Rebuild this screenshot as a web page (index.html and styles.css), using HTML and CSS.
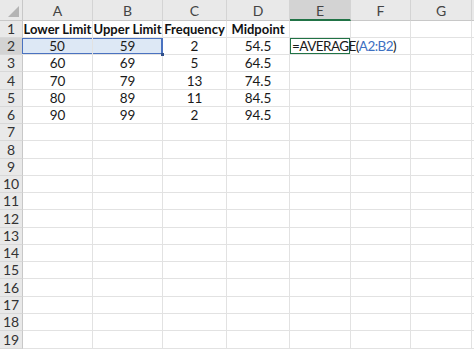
FILE: index.html
```html
<!DOCTYPE html>
<html lang="en">
<head>
    <meta charset="UTF-8">
    <title>Midpoint - Sheet1</title>
    <link rel="stylesheet" href="styles.css">
</head>
<body>
    <div class="sheet">
        <!-- column headers -->
        <div class="corner"></div>
        <div class="ch">A</div><div class="ch">B</div><div class="ch">C</div><div class="ch">D</div>
        <div class="ch active">E</div><div class="ch">F</div><div class="ch">G</div><div class="ch"></div>

        <div class="rh">1</div>
        <div class="c b">Lower Limit</div><div class="c b">Upper Limit</div><div class="c b">Frequency</div><div class="c b">Midpoint</div>
        <div class="c"></div><div class="c"></div><div class="c"></div><div class="c"></div>

        <div class="rh active">2</div>
        <div class="c ref-left">50</div><div class="c ref-right">59</div><div class="c">2</div><div class="c">54.5</div>
        <div class="c edit">=AVERAGE(<span class="ref">A2:B2</span>)<span class="caret"></span></div><div class="c"></div><div class="c"></div><div class="c"></div>

        <div class="rh">3</div>
        <div class="c">60</div><div class="c">69</div><div class="c">5</div><div class="c">64.5</div>
        <div class="c"></div><div class="c"></div><div class="c"></div><div class="c"></div>

        <div class="rh">4</div>
        <div class="c">70</div><div class="c">79</div><div class="c">13</div><div class="c">74.5</div>
        <div class="c"></div><div class="c"></div><div class="c"></div><div class="c"></div>

        <div class="rh">5</div>
        <div class="c">80</div><div class="c">89</div><div class="c">11</div><div class="c">84.5</div>
        <div class="c"></div><div class="c"></div><div class="c"></div><div class="c"></div>

        <div class="rh">6</div>
        <div class="c">90</div><div class="c">99</div><div class="c">2</div><div class="c">94.5</div>
        <div class="c"></div><div class="c"></div><div class="c"></div><div class="c"></div>

        <div class="rh">7</div><div class="c"></div><div class="c"></div><div class="c"></div><div class="c"></div><div class="c"></div><div class="c"></div><div class="c"></div><div class="c"></div>
        <div class="rh">8</div><div class="c"></div><div class="c"></div><div class="c"></div><div class="c"></div><div class="c"></div><div class="c"></div><div class="c"></div><div class="c"></div>
        <div class="rh">9</div><div class="c"></div><div class="c"></div><div class="c"></div><div class="c"></div><div class="c"></div><div class="c"></div><div class="c"></div><div class="c"></div>
        <div class="rh">10</div><div class="c"></div><div class="c"></div><div class="c"></div><div class="c"></div><div class="c"></div><div class="c"></div><div class="c"></div><div class="c"></div>
        <div class="rh">11</div><div class="c"></div><div class="c"></div><div class="c"></div><div class="c"></div><div class="c"></div><div class="c"></div><div class="c"></div><div class="c"></div>
        <div class="rh">12</div><div class="c"></div><div class="c"></div><div class="c"></div><div class="c"></div><div class="c"></div><div class="c"></div><div class="c"></div><div class="c"></div>
        <div class="rh">13</div><div class="c"></div><div class="c"></div><div class="c"></div><div class="c"></div><div class="c"></div><div class="c"></div><div class="c"></div><div class="c"></div>
        <div class="rh">14</div><div class="c"></div><div class="c"></div><div class="c"></div><div class="c"></div><div class="c"></div><div class="c"></div><div class="c"></div><div class="c"></div>
        <div class="rh">15</div><div class="c"></div><div class="c"></div><div class="c"></div><div class="c"></div><div class="c"></div><div class="c"></div><div class="c"></div><div class="c"></div>
        <div class="rh">16</div><div class="c"></div><div class="c"></div><div class="c"></div><div class="c"></div><div class="c"></div><div class="c"></div><div class="c"></div><div class="c"></div>
        <div class="rh">17</div><div class="c"></div><div class="c"></div><div class="c"></div><div class="c"></div><div class="c"></div><div class="c"></div><div class="c"></div><div class="c"></div>
        <div class="rh">18</div><div class="c"></div><div class="c"></div><div class="c"></div><div class="c"></div><div class="c"></div><div class="c"></div><div class="c"></div><div class="c"></div>
        <div class="rh">19</div><div class="c"></div><div class="c"></div><div class="c"></div><div class="c"></div><div class="c"></div><div class="c"></div><div class="c"></div><div class="c"></div>
    </div>
</body>
</html>
```

FILE: styles.css
```css
body {
    margin: 0;
    background-color: #fff;
    font-family: Lato, "Open Sans", sans-serif;
    font-size: 13.5px;
    color: #1a1a1a;
    overflow: hidden;
}

.sheet {
    display: grid;
    grid-template-columns: 23px 70px 70px 64px 63px 61px 60px 61px 20px;
    grid-template-rows: 20.5px;
    grid-auto-rows: 17.27px;
}

.sheet > div {
    box-sizing: border-box;
    border-right: 1px solid #e2e2e2;
    border-bottom: 1px solid #e2e2e2;
    white-space: nowrap;
    display: flex;
    align-items: flex-end;
    justify-content: center;
    line-height: 16px;
}

/* headers */
.corner,
.ch,
.rh {
    background-color: #e9e9e9;
    color: #444;
}

.sheet > .corner {
    position: relative;
    border-right: 1px solid #c8c8c8;
    border-bottom: 1px solid #c8c8c8;
}

.corner::after {
    content: "";
    position: absolute;
    right: 3px;
    bottom: 3px;
    border-style: solid;
    border-width: 0 0 11px 11px;
    border-color: transparent transparent #b4b4b4 transparent;
}

.sheet > .ch {
    padding-bottom: 1px;
    border-right: 1px solid #d4d4d4;
    border-bottom: 1px solid #c8c8c8;
    font-size: 14px;
}

.sheet > .ch.active {
    background-color: #d3d3d3;
    border-bottom: 2px solid #217346;
    padding-bottom: 0;
}

.sheet > .rh {
    border-right: 1px solid #c8c8c8;
    border-bottom: 1px solid #d8d8d8;
    font-size: 14px;
    color: #333;
}

.sheet > .rh.active {
    background-color: #d3d3d3;
}

.b {
    font-weight: bold;
    font-size: 13px;
    color: #111;
}

/* formula reference range A2:B2 */
.sheet > .ref-left,
.sheet > .ref-right {
    background-color: #dde8f5;
    position: relative;
}

.sheet > .ref-left {
    box-shadow: inset 1px 1px 0 #4a72c0, inset 0 -1px 0 #4a72c0;
    margin-left: -1px;
}

.sheet > .ref-right {
    box-shadow: inset -1px 1px 0 #4a72c0, inset 0 -1px 0 #4a72c0;
    border-right: 1px solid #4a72c0;
}

.ref-right::after {
    content: "";
    position: absolute;
    right: -2px;
    bottom: -2px;
    width: 3px;
    height: 3px;
    background-color: #2f4f8a;
}

/* cell being edited */
.sheet > .edit {
    position: relative;
    justify-content: flex-start;
    padding-left: 2px;
    letter-spacing: -0.55px;
    box-shadow: inset 0 0 0 1px #217346;
    overflow: visible;
    z-index: 1;
}

.ref {
    color: #3d70c2;
}

.caret {
    display: inline-block;
    width: 1px;
    height: 15px;
    margin-left: 2px;
    background-color: #222;
}
```
